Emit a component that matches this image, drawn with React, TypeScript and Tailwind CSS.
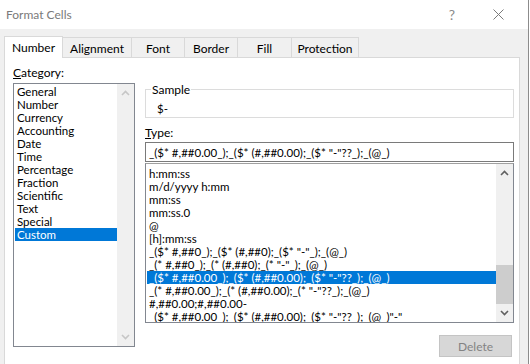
import React from "react";

const categories = [
  "General",
  "Number",
  "Currency",
  "Accounting",
  "Date",
  "Time",
  "Percentage",
  "Fraction",
  "Scientific",
  "Text",
  "Special",
  "Custom",
];

const formats = [
  "h:mm:ss",
  "m/d/yyyy h:mm",
  "mm:ss",
  "mm:ss.0",
  "@",
  "[h]:mm:ss",
  '_($* #,##0_);_($* (#,##0);_($* "-"_);_(@_)',
  '_(* #,##0_);_(* (#,##0);_(* "-"_);_(@_)',
  '_($* #,##0.00_);_($* (#,##0.00);_($* "-"??_);_(@_)',
  '_(* #,##0.00_);_(* (#,##0.00);_(* "-"??_);_(@_)',
  "#,##0.00;#,##0.00-",
  '_($* #,##0.00_);_($* (#,##0.00);_($* "-"??_);_(@_)"-"',
];

const tabs = ["Number", "Alignment", "Font", "Border", "Fill", "Protection"];
const tabWidths = ["w-[59px]", "w-[69px]", "w-[53px]", "w-[53px]", "w-[54px]", "w-[67px]"];

const Chevron = ({ up, color }: { up?: boolean; color: string }) => (
  <svg width="9" height="6" viewBox="0 0 9 6">
    <path
      d={up ? "M1 5 L4.5 1.5 L8 5" : "M1 1 L4.5 4.5 L8 1"}
      fill="none"
      stroke={color}
      strokeWidth="1.6"
    />
  </svg>
);

const App = () => {
  return (
    <div
      className="w-[530px] h-[364px] flex bg-white overflow-hidden text-[12px] leading-[13px] text-black"
      style={{ fontFamily: 'Lato, "Noto Sans", sans-serif' }}
    >
      <div className="w-[529px] h-full border-r border-[#8c8c8c] bg-[#f0f0f0] flex flex-col">
        {/* Title bar */}
        <div className="h-[29px] bg-white flex items-center pl-[6px] shrink-0">
          <span className="text-[#7a7a7a] text-[12px]">Format Cells</span>
          <div className="flex-1" />
          <span className="text-[#8a8a8a] text-[14px] mr-[38px]">?</span>
          <svg width="11" height="11" viewBox="0 0 11 11" className="mr-[24px]">
            <path d="M0.5 0.5 L10.5 10.5 M10.5 0.5 L0.5 10.5" stroke="#7a7a7a" strokeWidth="1" />
          </svg>
        </div>

        {/* Tabs */}
        <div className="flex items-end pl-[4px] pt-[7px] shrink-0 relative z-10">
          {tabs.map((t, i) =>
            i === 0 ? (
              <div
                key={t}
                className={`${tabWidths[i]} h-[22px] -mb-px bg-white border border-b-0 border-[#d9d9d9] flex items-center justify-center`}
              >
                {t}
              </div>
            ) : (
              <div
                key={t}
                className={`${tabWidths[i]} h-[20px] bg-[#f0f0f0] border border-l-0 border-b-0 border-[#d9d9d9] flex items-center justify-center pt-[1px]`}
              >
                {t}
              </div>
            )
          )}
        </div>

        {/* Panel */}
        <div className="ml-[4px] w-[516px] flex-1 bg-white border border-b-0 border-[#d9d9d9] flex text-[11.5px]">
          {/* Category */}
          <div className="ml-[8px] w-[122px] flex flex-col">
            <div className="h-[25px] flex items-center pt-[4px] text-[12px]">
              <span>
                <span className="underline">C</span>ategory:
              </span>
            </div>
            <div className="h-[264px] border border-[#828790] flex">
              <div className="flex-1 pt-[1px] pl-[1px]">
                {categories.map((c) => (
                  <div
                    key={c}
                    className={`h-[13px] pl-[2px] ${
                      c === "Custom" ? "bg-[#0078d7] text-white" : ""
                    }`}
                  >
                    {c}
                  </div>
                ))}
              </div>
              <div className="w-[17px] bg-[#f0f0f0] flex flex-col items-center justify-between py-[6px]">
                <Chevron up color="#c6c6c6" />
                <Chevron color="#c6c6c6" />
              </div>
            </div>
          </div>

          {/* Right column */}
          <div className="ml-[10px] w-[369px] flex flex-col">
            <fieldset className="mt-[24px] h-[36px] border border-[#dcdcdc] px-[5px] m-0">
              <legend className="px-[1px] leading-[15px] text-[12px]">Sample</legend>
              <div className="pl-[6px] mt-[5px]">$-</div>
            </fieldset>

            <div className="h-[24px] flex items-center pt-[4px] text-[12px]">
              <span>
                <span className="underline">T</span>ype:
              </span>
            </div>

            <div className="h-[20px] border border-[#7a7a7a] flex items-center pl-[3px] whitespace-nowrap overflow-hidden">
              {'_($* #,##0.00_);_($* (#,##0.00);_($* "-"??_);_(@_)'}
            </div>

            <div className="h-[160px] border border-[#828790] border-t-[#a0a0a0] flex mt-px">
              <div className="flex-1 pt-[3px] pl-[1px] overflow-hidden">
                {formats.map((f, i) => (
                  <div
                    key={i}
                    className={`h-[13px] pl-[2px] whitespace-nowrap ${
                      i === 8 ? "bg-[#0078d7] text-white" : ""
                    }`}
                  >
                    {f}
                  </div>
                ))}
              </div>
              <div className="w-[17px] bg-[#f0f0f0] flex flex-col">
                <div className="h-[17px] flex items-center justify-center">
                  <Chevron up color="#606060" />
                </div>
                <div className="h-[84px]" />
                <div className="h-[39px] bg-[#cdcdcd]" />
                <div className="flex-1 flex items-center justify-center">
                  <Chevron color="#606060" />
                </div>
              </div>
            </div>

            <div className="flex justify-end mt-[12px] pr-[2px]">
              <div className="w-[73px] h-[22px] bg-[#d7d7d7] border border-[#c4c4c4] flex items-center justify-center text-[#838383] text-[12px]">
                Delete
              </div>
            </div>
          </div>
        </div>
      </div>
    </div>
  );
};

export default App;
